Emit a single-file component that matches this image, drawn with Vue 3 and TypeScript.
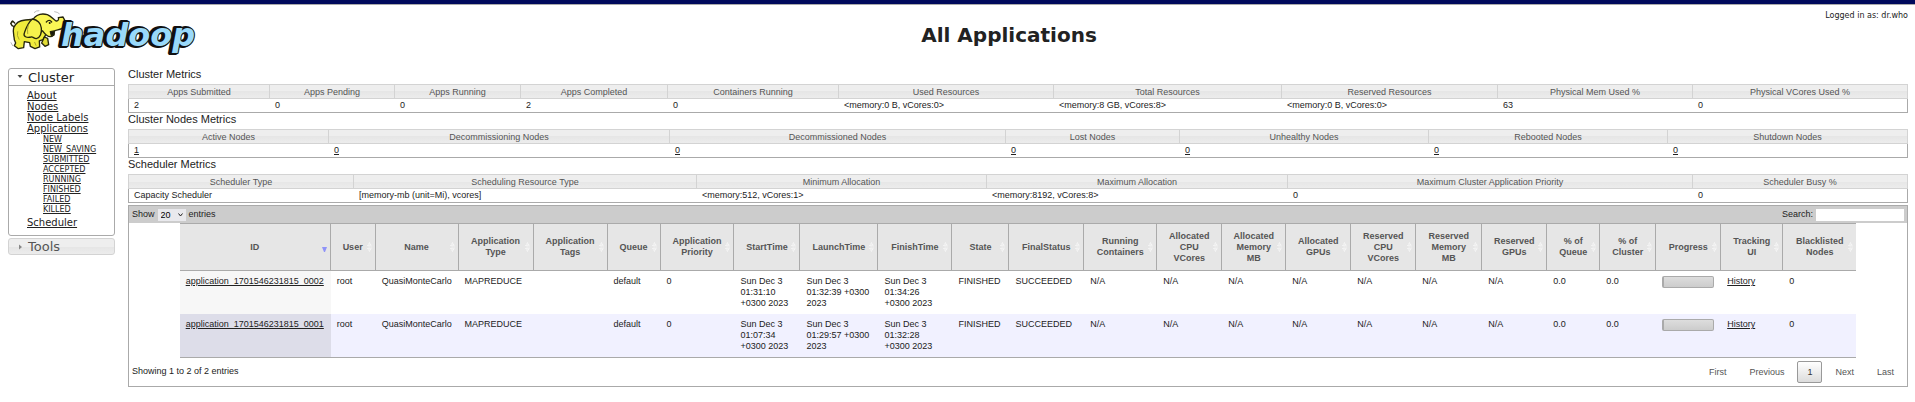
<script setup lang="ts">
import { ref } from 'vue'

interface MetricColumn {
  label: string
  value: string
  width: number
}

interface MetricTable {
  title: string
  linked: boolean
  columns: MetricColumn[]
}

interface AppColumn {
  label: string
  width: number
}

interface AppRow {
  id: string
  start: string
  launch: string
  finish: string
}

const clusterLinks: string[] = ['About', 'Nodes', 'Node Labels', 'Applications']
const stateLinks: string[] = ['NEW', 'NEW_SAVING', 'SUBMITTED', 'ACCEPTED', 'RUNNING', 'FINISHED', 'FAILED', 'KILLED']

const metricTables: MetricTable[] = [
  {
    title: 'Cluster Metrics',
    linked: false,
    columns: [
      { label: 'Apps Submitted', value: '2', width: 142 },
      { label: 'Apps Pending', value: '0', width: 125 },
      { label: 'Apps Running', value: '0', width: 126 },
      { label: 'Apps Completed', value: '2', width: 147 },
      { label: 'Containers Running', value: '0', width: 171 },
      { label: 'Used Resources', value: '<memory:0 B, vCores:0>', width: 215 },
      { label: 'Total Resources', value: '<memory:8 GB, vCores:8>', width: 228 },
      { label: 'Reserved Resources', value: '<memory:0 B, vCores:0>', width: 216 },
      { label: 'Physical Mem Used %', value: '63', width: 195 },
      { label: 'Physical VCores Used %', value: '0', width: 215 },
    ],
  },
  {
    title: 'Cluster Nodes Metrics',
    linked: true,
    columns: [
      { label: 'Active Nodes', value: '1', width: 201 },
      { label: 'Decommissioning Nodes', value: '0', width: 341 },
      { label: 'Decommissioned Nodes', value: '0', width: 336 },
      { label: 'Lost Nodes', value: '0', width: 174 },
      { label: 'Unhealthy Nodes', value: '0', width: 249 },
      { label: 'Rebooted Nodes', value: '0', width: 239 },
      { label: 'Shutdown Nodes', value: '0', width: 240 },
    ],
  },
  {
    title: 'Scheduler Metrics',
    linked: false,
    columns: [
      { label: 'Scheduler Type', value: 'Capacity Scheduler', width: 226 },
      { label: 'Scheduling Resource Type', value: '[memory-mb (unit=Mi), vcores]', width: 343 },
      { label: 'Minimum Allocation', value: '<memory:512, vCores:1>', width: 290 },
      { label: 'Maximum Allocation', value: '<memory:8192, vCores:8>', width: 301 },
      { label: 'Maximum Cluster Application Priority', value: '0', width: 405 },
      { label: 'Scheduler Busy %', value: '0', width: 215 },
    ],
  },
]

const appColumns: AppColumn[] = [
  { label: 'ID', width: 151 },
  { label: 'User', width: 45 },
  { label: 'Name', width: 83 },
  { label: 'Application\nType', width: 75 },
  { label: 'Application\nTags', width: 74 },
  { label: 'Queue', width: 53 },
  { label: 'Application\nPriority', width: 74 },
  { label: 'StartTime', width: 66 },
  { label: 'LaunchTime', width: 78 },
  { label: 'FinishTime', width: 74 },
  { label: 'State', width: 57 },
  { label: 'FinalStatus', width: 75 },
  { label: 'Running\nContainers', width: 73 },
  { label: 'Allocated\nCPU\nVCores', width: 65 },
  { label: 'Allocated\nMemory\nMB', width: 64 },
  { label: 'Allocated\nGPUs', width: 65 },
  { label: 'Reserved\nCPU\nVCores', width: 65 },
  { label: 'Reserved\nMemory\nMB', width: 66 },
  { label: 'Reserved\nGPUs', width: 65 },
  { label: '% of\nQueue', width: 53 },
  { label: '% of\nCluster', width: 56 },
  { label: 'Progress', width: 65 },
  { label: 'Tracking\nUI', width: 62 },
  { label: 'Blacklisted\nNodes', width: 73 },
]

const appRows: AppRow[] = [
  {
    id: 'application_1701546231815_0002',
    start: 'Sun Dec 3\n01:31:10\n+0300 2023',
    launch: 'Sun Dec 3\n01:32:39 +0300\n2023',
    finish: 'Sun Dec 3\n01:34:26\n+0300 2023',
  },
  {
    id: 'application_1701546231815_0001',
    start: 'Sun Dec 3\n01:07:34\n+0300 2023',
    launch: 'Sun Dec 3\n01:29:57 +0300\n2023',
    finish: 'Sun Dec 3\n01:32:28\n+0300 2023',
  },
]

const pageSize = ref('20')
const search = ref('')

function share(width: number, columns: { width: number }[]): { width: string } {
  const total = columns.reduce((sum, column) => sum + column.width, 0)
  return { width: `${(width / total) * 100}%` }
}

function cellsOf(row: AppRow): string[] {
  return [
    'root', 'QuasiMonteCarlo', 'MAPREDUCE', '', 'default', '0',
    row.start, row.launch, row.finish, 'FINISHED', 'SUCCEEDED',
    'N/A', 'N/A', 'N/A', 'N/A', 'N/A', 'N/A', 'N/A', '0.0', '0.0',
  ]
}
</script>

<template>
  <div class="page">
    <header class="header">
      <a class="logo" href="#" aria-label="Hadoop home">
        <svg width="192" height="50" viewBox="8 9 192 50">
          <g transform="translate(7 9) scale(0.3333)" stroke="#26260c" stroke-width="4" stroke-linejoin="round" stroke-linecap="round">
            <path d="M20 52C12 50 10 42 15 37M11 44L17 36L23 42" fill="none" />
            <path d="M55 33C40 34 26 42 20 56C16 72 22 82 22 92L26 102L22 110L34 119L50 116L52 98L68 101L70 112L84 119L98 114L97 96L108 92L120 70L90 30Z" fill="#f0ec3c" />
            <path d="M112 84L104 102L114 112L125 107L122 88Z" fill="#e2dd36" />
            <path d="M73 44C78 22 98 10 121 17C134 22 139 32 147 36C154 37 156 30 154 26L168 24C176 34 176 52 164 59C154 64 145 61 141 68C143 77 137 84 129 83C119 82 114 75 108 67Z" fill="#faf655" />
            <path d="M76 30C62 42 56 60 52 72C48 82 59 88 72 84C78 82 80 89 88 89C99 87 105 72 103 57C102 43 91 32 76 30Z" fill="#f6f24c" />
            <path d="M130 68L142 66L141 78L133 80Z" fill="#17170b" />
            <path d="M118 39Q127 29 134 39" fill="none" />
            <circle cx="128" cy="42" r="3" fill="#17170b" stroke="none" />
            <path d="M64 48Q60 61 62 74M32 68Q28 80 36 91M83 100L87 109" fill="none" stroke="#aaa529" stroke-width="3" />
            <path d="M82 10Q88 4 96 5M143 8Q152 9 157 14M12 101L17 110" fill="none" stroke="#999" stroke-width="2" />
          </g>
          <g class="wordmark">
            <text class="wordmark-shadow" x="59" y="46">hadoop</text>
            <text class="wordmark-face" x="61" y="46">hadoop</text>
          </g>
        </svg>
      </a>
      <h1>All Applications</h1>
      <div class="login">Logged in as: dr.who</div>
    </header>

    <div class="layout">
      <nav class="sidebar">
        <section class="panel">
          <h3 class="panel-title open">
            <svg width="6" height="4" viewBox="0 0 6 4"><path d="M0.5 0H5.5L3 3Z" fill="#444" /></svg>Cluster
          </h3>
          <div class="panel-body">
            <ul class="links">
              <li v-for="link in clusterLinks" :key="link"><a href="#">{{ link }}</a></li>
            </ul>
            <ul class="states">
              <li v-for="state in stateLinks" :key="state"><a href="#">{{ state }}</a></li>
            </ul>
            <ul class="links">
              <li><a href="#">Scheduler</a></li>
            </ul>
          </div>
        </section>
        <section class="panel closed">
          <h3 class="panel-title">
            <svg width="6" height="6" viewBox="0 0 6 6"><path d="M2 0.5L5 3L2 5.5Z" fill="#888" /></svg>Tools
          </h3>
        </section>
      </nav>

      <main class="content">
        <section v-for="table in metricTables" :key="table.title">
          <h2 class="caption">{{ table.title }}</h2>
          <table class="metrics" :aria-label="table.title">
            <thead>
              <tr>
                <th v-for="column in table.columns" :key="column.label" :style="share(column.width, table.columns)">{{ column.label }}</th>
              </tr>
            </thead>
            <tbody>
              <tr>
                <td v-for="column in table.columns" :key="column.label">
                  <a v-if="table.linked" href="#">{{ column.value }}</a>
                  <template v-else>{{ column.value }}</template>
                </td>
              </tr>
            </tbody>
          </table>
        </section>

        <section class="datatable">
          <div class="toolbar">
            <label>Show
              <span class="select-box">
                <select v-model="pageSize">
                  <option>20</option>
                  <option>50</option>
                  <option>100</option>
                </select>
                <svg width="5" height="4" viewBox="0 0 5 4"><path d="M0.5 0.5L2.5 3L4.5 0.5" fill="none" stroke="#222" /></svg>
              </span>
              entries</label>
            <label>Search: <input v-model="search" type="text" /></label>
          </div>

          <table class="apps">
            <thead>
              <tr>
                <th v-for="(column, index) in appColumns" :key="column.label" :style="share(column.width, appColumns)">
                  {{ column.label }}
                  <svg v-if="index === 0" class="sort" width="5" height="10" viewBox="0 0 5 10"><path d="M0 5H5L3 10H2Z" fill="#8f93f8" /></svg>
                  <svg v-else class="sort" width="5" height="10" viewBox="0 0 5 10"><path d="M0.5 4L2.5 0.5L4.5 4ZM0.5 6L2.5 9.5L4.5 6Z" fill="#eee" stroke="#fafafa" stroke-dasharray="1 1" /></svg>
                </th>
              </tr>
            </thead>
            <tbody>
              <tr v-for="row in appRows" :key="row.id">
                <td class="sorted"><a href="#">{{ row.id }}</a></td>
                <td v-for="(cell, index) in cellsOf(row)" :key="index">{{ cell }}</td>
                <td><div class="progress" role="progressbar" aria-label="Progress" aria-valuenow="0"></div></td>
                <td><a href="#">History</a></td>
                <td>0</td>
              </tr>
            </tbody>
          </table>

          <div class="footer">
            <div>Showing 1 to 2 of 2 entries</div>
            <div class="pager">
              <button type="button">First</button>
              <button type="button">Previous</button>
              <button type="button" class="current">1</button>
              <button type="button">Next</button>
              <button type="button">Last</button>
            </div>
          </div>
        </section>
      </main>
    </div>
  </div>
</template>

<style>
body {
  margin: 0;
  background: #fff;
}
</style>

<style scoped>
.page {
  border-top: 4px solid #000a5c;
  color: #222;
  font-family: "Liberation Sans", Arial, sans-serif;
  font-size: 9px;
  line-height: 11px;
}

.page * {
  box-sizing: border-box;
}

a {
  color: #222;
}

h1,
h2,
h3,
ul {
  margin: 0;
  padding: 0;
  font-weight: normal;
  list-style: none;
}

.header {
  display: grid;
  grid-template-columns: 102px 1fr;
  height: 61px;
  padding: 4px 7px 0 8px;
  border-top: 1px solid #aaa;
  font-family: "DejaVu Sans", Verdana, sans-serif;
}

.header > * {
  grid-row: 1;
}

.logo {
  grid-column: 1;
  width: 192px;
  height: 50px;
}

.logo svg {
  display: block;
}

.wordmark {
  font: italic bold 32px "DejaVu Sans", Verdana, sans-serif;
  stroke-linejoin: round;
}

.wordmark-shadow {
  fill: #111;
  stroke: #111;
  stroke-width: 4px;
}

.wordmark-face {
  fill: #99d9fa;
  stroke: #111;
  stroke-width: 2px;
  paint-order: stroke;
}

h1 {
  grid-column: 2;
  padding-top: 13px;
  font-size: 20px;
  font-weight: bold;
  line-height: 26px;
  text-align: center;
}

.login {
  grid-column: 2;
  justify-self: end;
  font-size: 8px;
  line-height: 14px;
}

.layout {
  display: grid;
  grid-template-columns: 107px minmax(0, 1fr);
  column-gap: 13px;
  padding: 0 7px 0 8px;
}

.sidebar {
  padding-top: 3px;
  font-family: "DejaVu Sans", Verdana, sans-serif;
}

.panel {
  margin-bottom: 2px;
  border: 1px solid #aaa;
  border-radius: 3px;
}

.panel.closed {
  border-color: #d3d3d3;
  background: linear-gradient(#eee 50%, #e5e5e5 50%, #ececec);
}

.panel-title {
  display: flex;
  align-items: center;
  gap: 5px;
  height: 15px;
  padding-left: 8px;
  color: #555;
  font-size: 13px;
  line-height: 15px;
}

.panel-title.open {
  height: 17px;
  border-bottom: 1px solid #aaa;
  color: #222;
}

.panel-body {
  padding: 4px 0 7px 18px;
  font-size: 10px;
}

.links {
  line-height: 11px;
}

.states {
  display: grid;
  grid-auto-rows: 1fr;
  height: 76px;
  margin: 1px 0 6px 16px;
  font-size: 8px;
  line-height: 10px;
}

.caption {
  height: 16px;
  font-size: 11px;
  line-height: 12px;
}

table {
  border-spacing: 0;
  table-layout: fixed;
}

th,
td {
  padding: 0;
  text-align: left;
}

.metrics {
  width: 100%;
}

.metrics th {
  height: 15px;
  padding-top: 1px;
  border: solid #d3d3d3;
  border-width: 1px 1px 1px 0;
  background: linear-gradient(#eee 50%, #e6e6e6 50%, #ececec);
  color: #555;
  font-weight: normal;
  text-align: center;
}

.metrics th:first-child {
  border-left-width: 1px;
}

.metrics td {
  height: 14px;
  padding-left: 5px;
  border-bottom: 1px solid #aaa;
}

.metrics td:first-child {
  border-left: 1px solid #aaa;
}

.metrics td:last-child {
  border-right: 1px solid #aaa;
}

.content > section:first-child {
  padding-top: 3px;
}

.datatable {
  margin-top: 2px;
  border: 1px solid #aaa;
}

.toolbar {
  display: flex;
  align-items: center;
  justify-content: space-between;
  height: 17px;
  padding: 0 3px;
  background: #ccc;
}

.toolbar label {
  display: flex;
  align-items: center;
  gap: 3px;
}

.select-box {
  display: inline-grid;
  grid-template-columns: 28px;
  align-items: center;
}

.select-box > * {
  grid-area: 1 / 1;
}

.select-box svg {
  justify-self: end;
  margin-right: 3px;
  pointer-events: none;
}

select,
input {
  height: 12px;
  padding: 0 3px;
  border: 0;
  appearance: none;
  background: #fff;
  color: #000;
  font: inherit;
  line-height: 12px;
}

select {
  background: #e9e9ed;
}

input {
  width: 88px;
}

.apps {
  width: 94.3%;
  margin: 0 auto;
}

.apps th {
  position: relative;
  height: 48px;
  border: solid #aaa;
  border-width: 1px 1px 1px 0;
  background: #e6e6e6;
  color: #555;
  text-align: center;
  white-space: pre-line;
}

.apps th:last-child {
  border-right: 0;
}

.sort {
  position: absolute;
  top: 18px;
  right: 3px;
}

.apps td {
  height: 43px;
  padding: 5px 0 5px 6px;
  vertical-align: top;
  white-space: pre-line;
}

.apps tbody tr:last-child td {
  height: 44px;
  border-bottom: 1px solid #aaa;
  background: #f1f1ff;
}

.apps td.sorted {
  background: #f7f7f7;
}

.apps tbody tr:last-child td.sorted {
  background: #dddde9;
}

.progress {
  width: 52px;
  height: 12px;
  border: 1px solid #aaa;
  border-left-width: 2px;
  border-radius: 2px;
  background: linear-gradient(#ddd, #ccc);
}

.footer {
  display: flex;
  justify-content: space-between;
  padding: 3px;
  line-height: 20px;
}

.pager {
  display: flex;
  gap: 3px;
}

button {
  height: 22px;
  padding: 0 9px;
  border: 1px solid transparent;
  background: none;
  color: #555;
  font: inherit;
}

.current {
  border-color: #999;
  border-radius: 2px;
  background: linear-gradient(#fff, #dcdcdc);
  color: #333;
}
</style>
